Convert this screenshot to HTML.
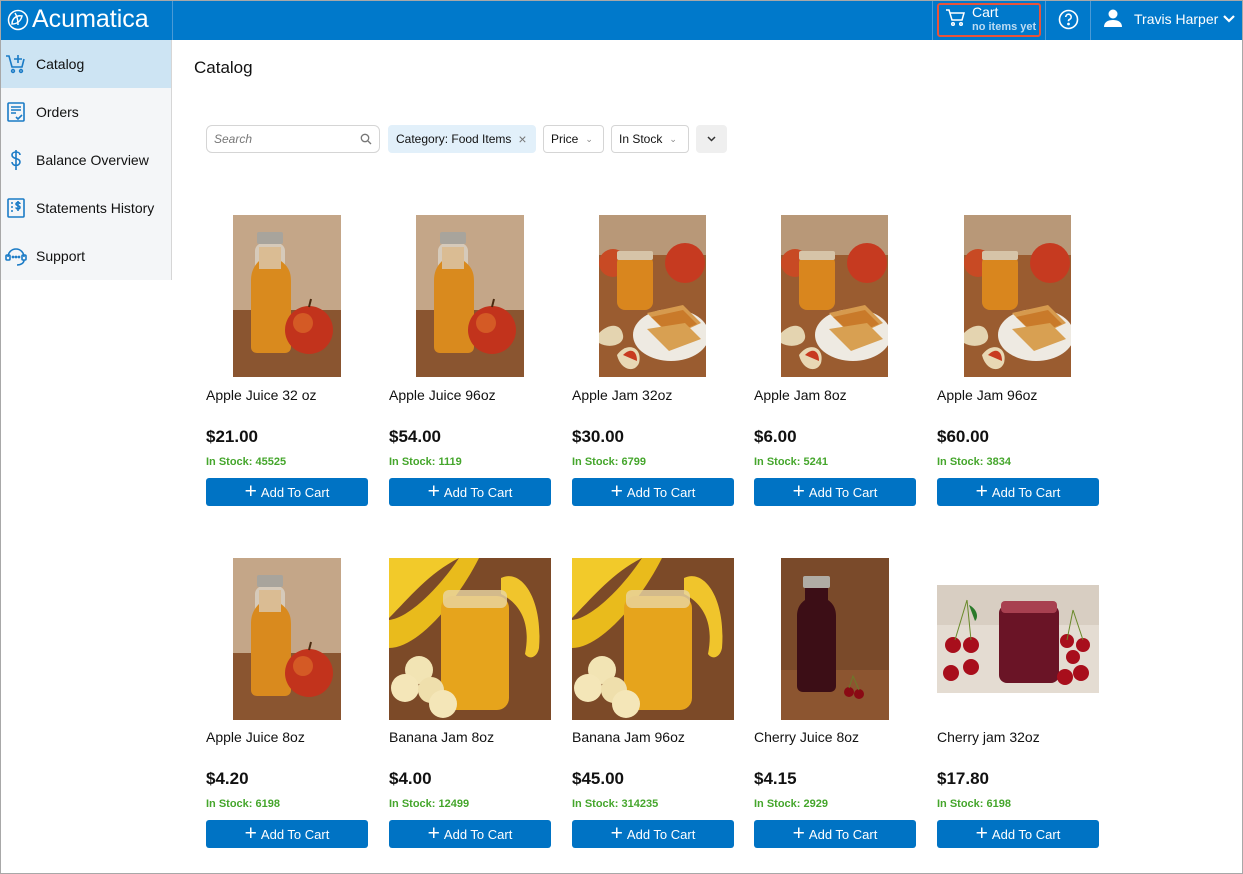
<!DOCTYPE html>
<html><head><meta charset="utf-8"><style>
*{box-sizing:border-box;margin:0;padding:0}
body{width:1243px;height:874px;overflow:hidden;background:#fff;font-family:"Liberation Sans",Arial,sans-serif;color:#111;position:relative}
.frame{position:absolute;left:0;top:0;width:1243px;height:874px;border:1px solid #a8a8a8;pointer-events:none;z-index:10}
.hdr{position:absolute;left:0;top:0;width:1243px;height:40px;background:#0079cb}
.logo{position:absolute;left:7px;top:5px;color:#fff;font-size:25px;display:flex;align-items:center;gap:3px}
.vsep{position:absolute;top:0;width:1px;height:40px;background:#4a9ad6}
.side{position:absolute;left:0;top:40px;width:172px;height:240px;background:#f4f6f8;border-right:1px solid #d6d6d6}
.nav{height:48px;display:flex;align-items:center;font-size:14px;padding-left:5px}
.nav svg{margin-right:9px}
.nav.act{background:#cde4f3}
.abs{position:absolute}
.card{position:absolute;width:162px}
.name{position:absolute;top:0;font-size:14px;white-space:nowrap}
.price{position:absolute;top:40px;font-size:17px;font-weight:bold}
.stock{position:absolute;top:69px;font-size:11px;color:#45a62c;font-weight:bold}
.btn{position:absolute;top:91px;left:0;width:162px;height:28px;background:#0073c4;border-radius:3px;color:#fff;font-size:13px;display:flex;align-items:center;justify-content:center}
.btn span{font-size:21px;font-weight:300;margin-right:4px;line-height:1;margin-top:-2px}
.fl{position:absolute;top:125px;height:28px;border:1px solid #d5d5d5;border-radius:4px;font-size:12px;display:flex;align-items:center;padding:0 7px;gap:7px;white-space:nowrap}
</style></head><body>
<div class="frame"></div>
<div class="hdr">
 <div class="logo"><svg width="22" height="22" viewBox="0 0 22 22" fill="none" stroke="#fff" stroke-width="1.5"><circle cx="11" cy="11" r="9.5"/><path d="M5 15c0-6 5-9 10-8c-1 4-4 8-10 8z"/><path d="M8 4c2 3 3 7 3 12"/></svg><span>Acumatica</span></div>
 <div class="vsep" style="left:172px"></div>
 <div class="vsep" style="left:932px"></div>
 <div class="abs" style="left:937px;top:3px;width:104px;height:34px;border:2px solid #e8533a;border-radius:3px"></div>
 <svg class="abs" style="left:945px;top:9px" width="20" height="18" viewBox="0 0 20 18" fill="none" stroke="#fff" stroke-width="1.5"><path d="M1 1h3l3 10h10l2-7H5"/><circle cx="8" cy="15" r="1.3"/><circle cx="16" cy="15" r="1.3"/></svg>
 <div class="abs" style="left:972px;top:4px;color:#fff;font-size:14px">Cart</div>
 <div class="abs" style="left:972px;top:21px;color:#bcdcf3;font-size:11px;font-weight:bold">no items yet</div>
 <div class="vsep" style="left:1045px"></div>
 <svg class="abs" style="left:1058px;top:9px" width="21" height="21" viewBox="0 0 21 21" fill="none" stroke="#fff" stroke-width="1.6"><circle cx="10.5" cy="10.5" r="9"/><path d="M7.8 8a2.7 2.7 0 1 1 3.8 2.4c-.8.4-1.1.9-1.1 1.8"/><circle cx="10.5" cy="15" r=".6" fill="#fff"/></svg>
 <div class="vsep" style="left:1090px"></div>
 <svg class="abs" style="left:1103px;top:9px" width="20" height="18" viewBox="0 0 20 18" fill="#fff"><circle cx="10" cy="5" r="4.5"/><path d="M1 18c0-5 4-7 9-7s9 2 9 7z"/></svg>
 <div class="abs" style="left:1134px;top:11px;color:#fff;font-size:14px">Travis Harper</div>
 <svg class="abs" style="left:1222px;top:14px" width="14" height="10" viewBox="0 0 14 10" fill="none" stroke="#fff" stroke-width="2.2"><path d="M2 2l5 5 5-5"/></svg>
</div>
<div class="side">
 <div class="nav act"><svg width="22" height="22" viewBox="0 0 22 22" fill="none" stroke="#1a7bc6" stroke-width="1.6"><path d="M1 3h3l3 11h10l2-8"/><path d="M13 2v8M9 6h8"/><circle cx="8" cy="18" r="1.4"/><circle cx="16" cy="18" r="1.4"/></svg>Catalog</div>
 <div class="nav"><svg width="22" height="22" viewBox="0 0 22 22" fill="none" stroke="#1a7bc6" stroke-width="1.6"><rect x="3" y="2" width="16" height="18" rx="1"/><path d="M6 6h10M6 9h10M6 12h5M11 16l2 2 4-4"/></svg>Orders</div>
 <div class="nav"><svg width="22" height="22" viewBox="0 0 22 22" fill="none" stroke="#1a7bc6" stroke-width="1.6"><path d="M15 6c0-2-2-3-4-3s-4 1-4 3 2 3 4 3.5 4 1.5 4 3.5-2 3.5-4 3.5-4-1.5-4-3.5M11 1v20"/></svg>Balance Overview</div>
 <div class="nav"><svg width="22" height="22" viewBox="0 0 22 22" fill="none" stroke="#1a7bc6" stroke-width="1.6"><rect x="3" y="2" width="16" height="18" rx="1"/><path d="M6 6h2M6 10h2M6 14h2M15 7c0-1-1-1.5-2-1.5s-2 .5-2 1.5 1 1.3 2 1.6 2 .8 2 1.8-1 1.6-2 1.6-2-.6-2-1.6M13 4v10"/></svg>Statements History</div>
 <div class="nav"><svg width="22" height="22" viewBox="0 0 22 22" fill="none" stroke="#1a7bc6" stroke-width="1.6"><path d="M3 12a8 8 0 0 1 16 0"/><rect x="1" y="10" width="4" height="5" rx="1"/><rect x="17" y="10" width="4" height="5" rx="1"/><path d="M19 15c0 3-3 5-7 5"/><circle cx="8" cy="12" r=".6"/><circle cx="11" cy="12" r=".6"/><circle cx="14" cy="12" r=".6"/></svg>Support</div>
</div>
<div class="abs" style="left:194px;top:58px;font-size:17px">Catalog</div>
<div class="fl" style="left:206px;width:174px;justify-content:space-between;border-radius:6px"><i style="color:#777;font-size:12px">Search</i><svg width="12" height="12" viewBox="0 0 12 12" fill="none" stroke="#777" stroke-width="1.3"><circle cx="5" cy="5" r="3.7"/><path d="M8 8l3 3"/></svg></div>
<div class="fl" style="left:388px;width:148px;background:#e2f0fa;border-color:#e2f0fa">Category: Food Items <span style="color:#777;font-size:14px">×</span></div>
<div class="fl" style="left:543px;width:61px">Price <span style="color:#888;font-size:9px">⌄</span></div>
<div class="fl" style="left:611px;width:78px">In Stock <span style="color:#888;font-size:9px">⌄</span></div>
<div class="fl" style="left:696px;width:31px;background:#efefef;border-color:#efefef;justify-content:center"><svg width="9" height="6" viewBox="0 0 9 6" fill="none" stroke="#333" stroke-width="1.5"><path d="M1 1l3.5 3.5L8 1"/></svg></div>

<svg width="0" height="0" style="position:absolute"><defs>
<g id="juice"><rect width="108" height="162" fill="#c4a688"/><rect y="95" width="108" height="67" fill="#8a5530"/><rect x="22" y="28" width="30" height="110" rx="8" fill="#e2e2dc" opacity=".6"/><path d="M26 32h22v14c8 6 10 12 10 20v66c0 4-3 6-6 6H24c-3 0-6-2-6-6V66c0-8 2-14 8-20z" fill="#d98a1e"/><path d="M26 32h22v22H26z" fill="#d9c8b0" opacity=".8"/><rect x="24" y="17" width="26" height="12" rx="2" fill="#a8a49c"/><circle cx="76" cy="115" r="24" fill="#c2331c"/><circle cx="70" cy="108" r="10" fill="#e0752c" opacity=".6"/><path d="M76 92l2-8" stroke="#4a2a10" stroke-width="2"/></g>
<g id="jam"><rect width="107" height="162" fill="#b89878"/><rect y="40" width="107" height="122" fill="#9a5c30"/><circle cx="86" cy="48" r="20" fill="#c63a20"/><circle cx="14" cy="48" r="14" fill="#c84a24"/><rect x="18" y="40" width="36" height="55" rx="8" fill="#d9861e"/><rect x="18" y="36" width="36" height="9" rx="2" fill="#d6c4a8"/><ellipse cx="72" cy="120" rx="38" ry="26" fill="#eeeae2"/><path d="M48 98l36-8 18 18-30 14z" fill="#d69a4e"/><path d="M52 102l32-7 14 14-26 11z" fill="#c97a2a"/><path d="M48 114l38-6 16 16-32 12z" fill="#d8a052"/><path d="M0 118c10-10 22-10 24 2 2 10-14 14-24 8z" fill="#e4d4b0"/><path d="M18 140c10-14 26-8 22 8-4 10-18 8-22-8z" fill="#e8d8b4"/><path d="M24 140c8-8 14-4 14 6" fill="#c83a20"/></g>
<g id="banana"><rect width="162" height="162" fill="#7c4a28"/><path d="M0 60C20 40 40 15 70 0H0z" fill="#f2ca2a"/><path d="M0 90c30 0 70-50 90-90H70C50 30 20 60 0 62z" fill="#e9bb1c"/><path d="M112 20c20-10 42 20 38 70-2 10-10 12-14 6 6-30-4-50-24-60z" fill="#f0c52c"/><rect x="52" y="38" width="68" height="114" rx="12" fill="#e6a41c"/><rect x="54" y="32" width="64" height="18" rx="6" fill="#e8d6a4" opacity=".8"/><circle cx="30" cy="112" r="14" fill="#f2e4b4"/><circle cx="16" cy="130" r="14" fill="#f4e6b8"/><circle cx="42" cy="132" r="13" fill="#efdfac"/><circle cx="54" cy="146" r="14" fill="#f4e6b8"/></g>
<g id="cjuice"><rect width="108" height="162" fill="#7a4a2a"/><rect y="112" width="108" height="50" fill="#8c5530"/><rect x="22" y="18" width="27" height="12" rx="2" fill="#b0aca4"/><path d="M24 30h23v12c6 4 8 10 8 16v70c0 4-3 6-6 6H22c-3 0-6-2-6-6V58c0-6 2-12 8-16z" fill="#3c0e16"/><circle cx="68" cy="134" r="5" fill="#8a0a14"/><circle cx="78" cy="136" r="5" fill="#8a0a14"/><path d="M68 130l4-12 6 14" stroke="#6a7a2a" fill="none"/></g>
<g id="cjam"><rect width="162" height="108" fill="#e4dcd2"/><rect width="162" height="40" fill="#d8cec2"/><rect x="62" y="20" width="60" height="78" rx="8" fill="#6a1426"/><rect x="64" y="16" width="56" height="12" rx="4" fill="#a84050"/><g fill="#a80e1c"><circle cx="16" cy="60" r="8"/><circle cx="34" cy="60" r="8"/><circle cx="14" cy="88" r="8"/><circle cx="34" cy="82" r="8"/><circle cx="130" cy="56" r="7"/><circle cx="146" cy="60" r="7"/><circle cx="136" cy="72" r="7"/><circle cx="128" cy="92" r="8"/><circle cx="144" cy="88" r="8"/></g><path d="M30 15l-12 40M30 15l4 40M136 25l-6 30M136 25l10 30" stroke="#6a8a2a" fill="none"/><path d="M32 20c8 4 10 12 6 16z" fill="#2a7a2a"/></g>
</defs></svg>

<svg class="abs" style="left:233px;top:215px" width="108" height="162"><use href="#juice"/></svg>
<svg class="abs" style="left:416px;top:215px" width="108" height="162"><use href="#juice"/></svg>
<svg class="abs" style="left:599px;top:215px" width="107" height="162"><use href="#jam"/></svg>
<svg class="abs" style="left:781px;top:215px" width="107" height="162"><use href="#jam"/></svg>
<svg class="abs" style="left:964px;top:215px" width="107" height="162"><use href="#jam"/></svg>
<svg class="abs" style="left:233px;top:558px" width="108" height="162"><use href="#juice"/></svg>
<svg class="abs" style="left:389px;top:558px" width="162" height="162"><use href="#banana"/></svg>
<svg class="abs" style="left:572px;top:558px" width="162" height="162"><use href="#banana"/></svg>
<svg class="abs" style="left:781px;top:558px" width="108" height="162"><use href="#cjuice"/></svg>
<svg class="abs" style="left:937px;top:585px" width="162" height="108"><use href="#cjam"/></svg>

<div class="card" style="left:206px;top:387px"><div class="name">Apple Juice 32 oz</div><div class="price">$21.00</div><div class="stock">In Stock: 45525</div><div class="btn"><span>+</span>Add To Cart</div></div>
<div class="card" style="left:389px;top:387px"><div class="name">Apple Juice 96oz</div><div class="price">$54.00</div><div class="stock">In Stock: 1119</div><div class="btn"><span>+</span>Add To Cart</div></div>
<div class="card" style="left:572px;top:387px"><div class="name">Apple Jam 32oz</div><div class="price">$30.00</div><div class="stock">In Stock: 6799</div><div class="btn"><span>+</span>Add To Cart</div></div>
<div class="card" style="left:754px;top:387px"><div class="name">Apple Jam 8oz</div><div class="price">$6.00</div><div class="stock">In Stock: 5241</div><div class="btn"><span>+</span>Add To Cart</div></div>
<div class="card" style="left:937px;top:387px"><div class="name">Apple Jam 96oz</div><div class="price">$60.00</div><div class="stock">In Stock: 3834</div><div class="btn"><span>+</span>Add To Cart</div></div>

<div class="card" style="left:206px;top:729px"><div class="name">Apple Juice 8oz</div><div class="price">$4.20</div><div class="stock">In Stock: 6198</div><div class="btn"><span>+</span>Add To Cart</div></div>
<div class="card" style="left:389px;top:729px"><div class="name">Banana Jam 8oz</div><div class="price">$4.00</div><div class="stock">In Stock: 12499</div><div class="btn"><span>+</span>Add To Cart</div></div>
<div class="card" style="left:572px;top:729px"><div class="name">Banana Jam 96oz</div><div class="price">$45.00</div><div class="stock">In Stock: 314235</div><div class="btn"><span>+</span>Add To Cart</div></div>
<div class="card" style="left:754px;top:729px"><div class="name">Cherry Juice 8oz</div><div class="price">$4.15</div><div class="stock">In Stock: 2929</div><div class="btn"><span>+</span>Add To Cart</div></div>
<div class="card" style="left:937px;top:729px"><div class="name">Cherry jam 32oz</div><div class="price">$17.80</div><div class="stock">In Stock: 6198</div><div class="btn"><span>+</span>Add To Cart</div></div>
</body></html>
